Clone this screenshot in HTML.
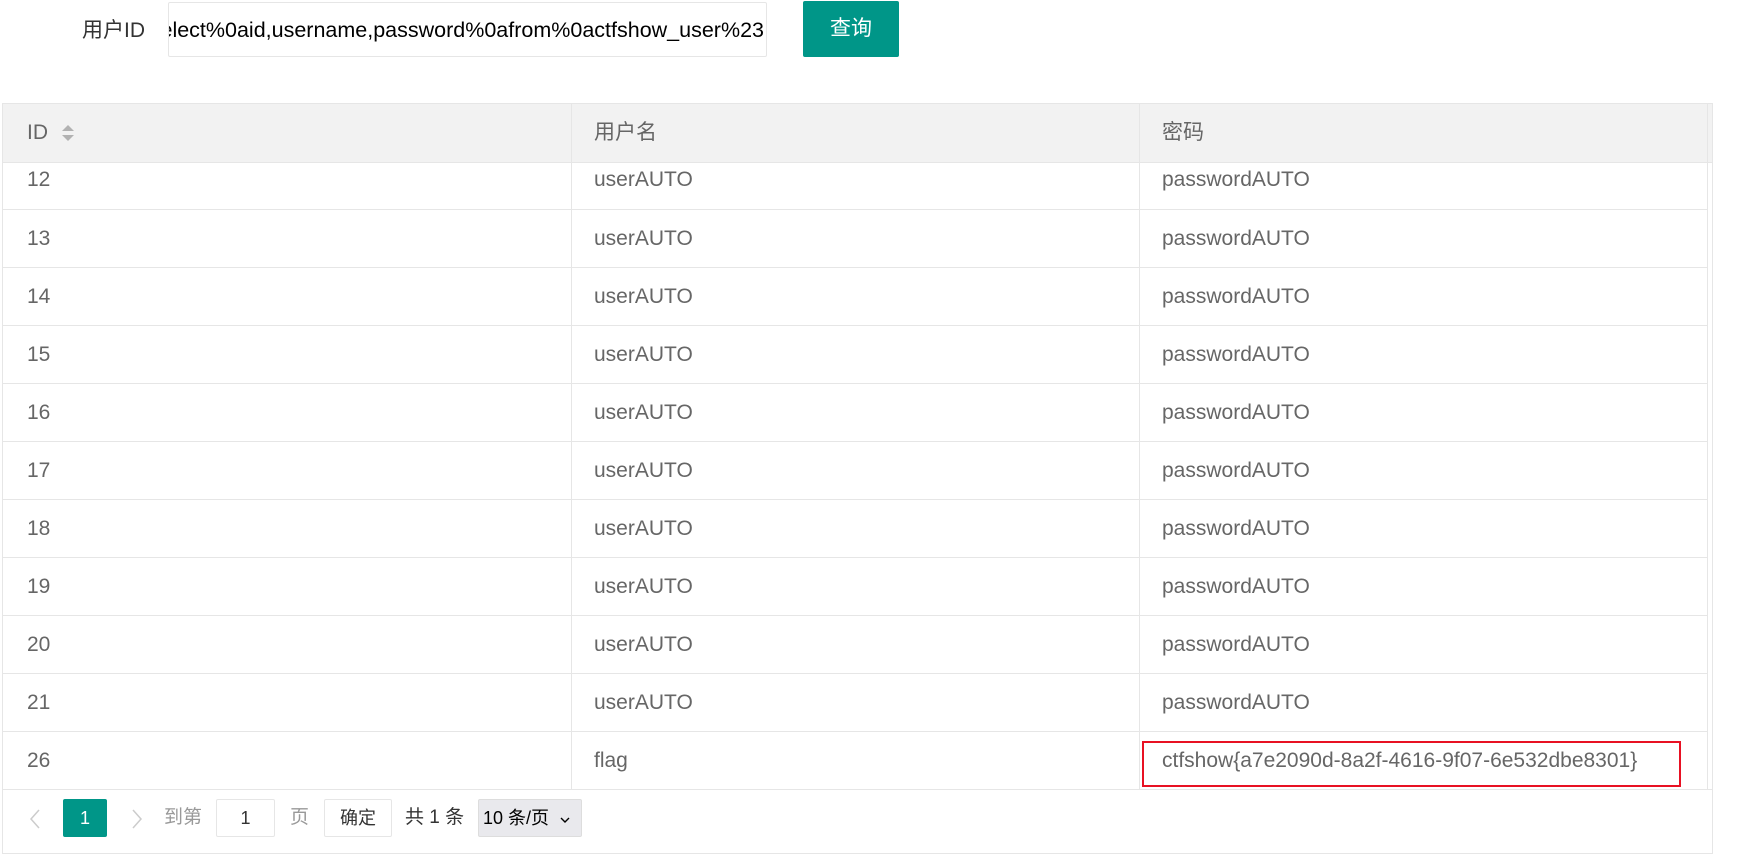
<!DOCTYPE html>
<html><head><meta charset="utf-8"><style>
*{margin:0;padding:0;box-sizing:border-box}
body{width:1751px;height:862px;background:#fff;position:relative;overflow:hidden;font-family:"Liberation Sans","Noto Sans CJK SC",sans-serif;color:#666;font-size:21px}
.a{position:absolute;white-space:nowrap}
.hl{position:absolute;height:1px;background:#e6e6e6}
.vl{position:absolute;width:1px;background:#e6e6e6}
.t{position:absolute;line-height:22px}
</style></head><body>
<div class="a" style="left:82px;top:18px;font-size:21px;color:#333;line-height:26px">用户ID</div>
<div class="a" style="left:168px;top:2px;width:599px;height:55px;border:1px solid #e6e6e6;border-radius:2px;overflow:hidden">
<div class="a" style="top:14px;font-size:21.5px;color:#000;line-height:26px;right:2px">select%0aid,username,password%0afrom%0actfshow_user%23</div></div>
<div class="a" style="left:803px;top:1px;width:96px;height:56px;background:#009688;border-radius:2px;color:#fff;font-size:21px;text-align:center;line-height:56px">查询</div>

<div class="a" style="left:2px;top:103px;width:1711px;height:751px;border:1px solid #e6e6e6"></div>
<div class="a" style="left:3px;top:104px;width:1709px;height:58px;background:#f2f2f2"></div>
<div class="hl" style="left:3px;top:162px;width:1709px"></div>
<div class="vl" style="left:1707px;top:104px;height:685px"></div>
<div class="vl" style="left:571px;top:104px;height:685px"></div>
<div class="vl" style="left:1139px;top:104px;height:685px"></div>
<div class="t" style="left:27px;top:122px">ID</div>
<svg class="a" style="left:61px;top:124px" width="14" height="18"><path d="M1 7 L7 1 L13 7Z" fill="#b2b2b2"/><path d="M1 11 L7 17 L13 11Z" fill="#b2b2b2"/></svg>
<div class="t" style="left:594px;top:122px">用户名</div>
<div class="t" style="left:1162px;top:122px">密码</div>

<div id="rows"></div>
<script>
var ids=["12","13","14","15","16","17","18","19","20","21","26"];
var h="";
for(var i=0;i<11;i++){
 var b=Math.round(209+58*i);
 var c=(i==0?169:b-58+19);
 h+='<div class="hl" style="left:3px;top:'+b+'px;width:'+(i==10?1709:1704)+'px"></div>';
 h+='<div class="t" style="left:27px;top:'+c+'px">'+ids[i]+'</div>';
 h+='<div class="t" style="left:594px;top:'+c+'px">'+(i==10?'flag':'userAUTO')+'</div>';
 h+='<div class="t" style="left:1162px;top:'+c+'px">'+(i==10?'ctfshow{a7e2090d-8a2f-4616-9f07-6e532dbe8301}':'passwordAUTO')+'</div>';
}
document.getElementById('rows').innerHTML=h;
</script>
<div class="a" style="left:1142px;top:741px;width:539px;height:46px;border:2px solid #e81123"></div>

<svg class="a" style="left:28px;top:809px" width="14" height="20"><path d="M11 1 L3 10 L11 19" fill="none" stroke="#ccc" stroke-width="1.5"/></svg>
<div class="a" style="left:63px;top:799px;width:44px;height:38px;background:#009688;border-radius:2px;color:#fff;text-align:center;line-height:38px;font-size:18px">1</div>
<svg class="a" style="left:130px;top:809px" width="14" height="20"><path d="M3 1 L11 10 L3 19" fill="none" stroke="#ccc" stroke-width="1.5"/></svg>
<div class="a" style="left:164px;top:807px;font-size:19px;color:#999;line-height:22px">到第</div>
<div class="a" style="left:216px;top:799px;width:59px;height:38px;border:1px solid #e6e6e6;border-radius:2px;text-align:center;line-height:36px;font-size:18px;color:#333">1</div>
<div class="a" style="left:290px;top:807px;font-size:19px;color:#999;line-height:22px">页</div>
<div class="a" style="left:324px;top:799px;width:68px;height:38px;border:1px solid #e6e6e6;border-radius:2px;text-align:center;line-height:36px;font-size:18px;color:#333">确定</div>
<div class="a" style="left:405px;top:807px;font-size:19px;color:#333;line-height:22px">共 1 条</div>
<div class="a" style="left:478px;top:799px;width:104px;height:38px;background:#e9e9ed;border:1px solid #ddd;border-radius:2px;font-size:18px;color:#000;line-height:36px;padding-left:4px">10 条/页 <svg width="10" height="8" style="margin-left:6px"><path d="M1 2 L5 6 L9 2" fill="none" stroke="#000" stroke-width="1.4"/></svg></div>
</body></html>
